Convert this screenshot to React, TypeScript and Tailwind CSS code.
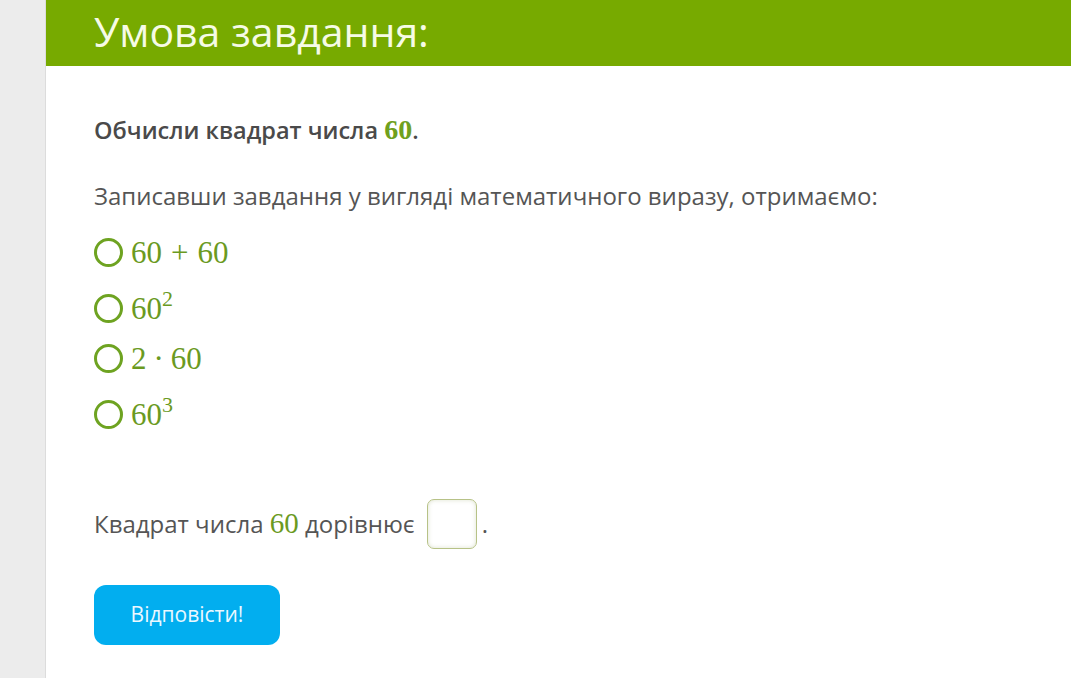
import React from "react";

const math = { fontFamily: '"Liberation Serif", "DejaVu Serif", serif' } as const;

function Radio({ children, className = "" }: { children: React.ReactNode; className?: string }) {
  return (
    <div className={"flex items-center h-[28px] " + className}>
      <span className="w-[29px] h-[29px] rounded-full border-[3px] border-[#6ea321] bg-white shrink-0" />
      <span className="ml-[8px] text-[31px] leading-none text-[#6b9a1f]" style={math}>
        {children}
      </span>
    </div>
  );
}

export default function App() {
  return (
    <div
      className="w-[1071px] h-[678px] flex bg-white overflow-hidden"
      style={{ fontFamily: '"Open Sans", "Noto Sans", sans-serif' }}
    >
      <div className="w-[46px] shrink-0 bg-[#ececec] border-r border-[#dcdcdc]" />
      <div className="flex-1 flex flex-col">
        <div className="h-[66px] bg-[#77aa00] flex items-center pl-[48px] pb-[4px]">
          <h1 className="text-[41px] font-normal text-[#f6fbe6] leading-none">Умова завдання:</h1>
        </div>
        <div className="pl-[48px] pt-[50px] text-[#4a4a4a]">
          <p className="text-[23.5px] font-semibold leading-none flex items-baseline h-[28px]">
            Обчисли квадрат числа&nbsp;
            <span className="text-[28px] font-bold text-[#6fa01e]" style={math}>60</span>.
          </p>
          <p className="mt-[40px] text-[24px] leading-none text-[#555]">
            Записавши завдання у вигляді математичного виразу, отримаємо:
          </p>
          <div className="mt-[30px] flex flex-col">
            <Radio>
              60<span className="mx-[9px]">+</span>60
            </Radio>
            <Radio className="mt-[28px]">
              60<sup className="text-[22px] top-[-13px]">2</sup>
            </Radio>
            <Radio className="mt-[22px]">
              2<span className="mx-[7px]">·</span>60
            </Radio>
            <Radio className="mt-[28px]">
              60<sup className="text-[22px] top-[-13px]">3</sup>
            </Radio>
          </div>
          <div className="mt-[71px] flex items-center text-[24px] text-[#555]">
            <span>Квадрат числа&nbsp;</span>
            <span className="text-[29px] text-[#6b9a1f]" style={math}>60</span>
            <span>&nbsp;дорівнює</span>
            <span className="ml-[12px] w-[50px] h-[50px] rounded-[7px] border border-[#b7c287] bg-white shadow-[inset_0_0_4px_rgba(120,140,60,0.25)]" />
            <span className="ml-[5px]">.</span>
          </div>
          <button className="mt-[36px] w-[186px] h-[60px] rounded-[12px] bg-[#02aeef] text-[#eaf8ff] text-[21px] flex items-center justify-center">
            Відповісти!
          </button>
        </div>
      </div>
    </div>
  );
}
